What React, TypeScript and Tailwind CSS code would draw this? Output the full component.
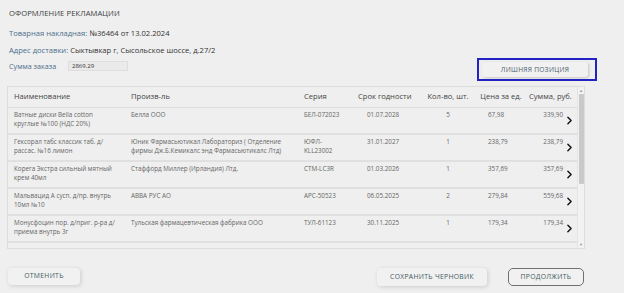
import { ChevronRight } from "lucide-react";

type Row = {
  name: string[];
  maker: string[];
  series: string[];
  date: string;
  qty: string;
  price: string;
  sum: string;
};

const rows: Row[] = [
  {
    name: ["Ватные диски Bella cotton", "круглые №100 (НДС 20%)"],
    maker: ["Белла ООО"],
    series: ["БЕЛ-072023"],
    date: "01.07.2028",
    qty: "5",
    price: "67,98",
    sum: "339,90",
  },
  {
    name: ["Гексорал табс классик таб. д/", "рассас. №16 лимон"],
    maker: [
      "Юник Фармасьютикал Лабораториз ( Отделение",
      "фирмы Дж.Б.Кемикалс энд Фармасьютикалс Лтд)",
    ],
    series: ["ЮФЛ-", "KLL23002"],
    date: "31.01.2027",
    qty: "1",
    price: "238,79",
    sum: "238,79",
  },
  {
    name: ["Корега Экстра сильный мятный", "крем 40мл"],
    maker: ["Стаффорд Миллер (Ирландия) Лтд."],
    series: ["СТМ-LC3R"],
    date: "01.03.2026",
    qty: "1",
    price: "357,69",
    sum: "357,69",
  },
  {
    name: ["Мальвацид А сусп. д/пр. внутрь", "10мл №10"],
    maker: ["АВВА РУС АО"],
    series: ["АРС-50523"],
    date: "06.05.2025",
    qty: "2",
    price: "279,84",
    sum: "559,68",
  },
  {
    name: ["Монусфоцин пор. д/приг. р-ра д/", "приема внутрь 3г"],
    maker: ["Тульская фармацевтическая фабрика ООО"],
    series: ["ТУЛ-61123"],
    date: "30.11.2025",
    qty: "1",
    price: "179,34",
    sum: "179,34",
  },
];

const cols = "grid grid-cols-[117px_173px_54px_65px_50px_56px_1fr]";

function Lines({ lines }: { lines: string[] }) {
  return (
    <>
      {lines.map((l) => (
        <span key={l} className="block whitespace-nowrap">
          {l}
        </span>
      ))}
    </>
  );
}

export default function App() {
  return (
    <div
      className="h-[293px] w-[624px] overflow-hidden bg-[#efefef] text-[#444]"
      style={{ fontFamily: '"Open Sans", "Liberation Sans", sans-serif' }}
    >
      <div className="px-[9px] pt-[8px]">
        <h1 className="text-[7.6px] leading-[10px] tracking-[0.1px] text-[#3d3d3d]">
          ОФОРМЛЕНИЕ РЕКЛАМАЦИИ
        </h1>
        <p className="mt-[10px] text-[7.6px] leading-[10px]">
          <span className="text-[#4d6e8c]">Товарная накладная:</span>{" "}
          <span className="text-[#333]">№36464 от 13.02.2024</span>
        </p>
        <p className="mt-[7px] text-[7.6px] leading-[10px]">
          <span className="text-[#4d6e8c]">Адрес доставки:</span>{" "}
          <span className="text-[#333]">Сыктывкар г, Сысольское шоссе, д.27/2</span>
        </p>
        <div className="mt-[3px] flex items-start">
          <div className="mt-[3px] flex items-center">
            <span className="w-[59px] text-[7.2px] leading-[10px] text-[#4d6e8c]">Сумма заказа</span>
            <div className="h-[10px] w-[60px] border border-[#dedede] bg-[#eaeaea] pl-[3px] text-[6px] leading-[8px] text-[#333]">
              2869.29
            </div>
          </div>
          <div className="ml-auto mr-[18px] flex h-[23px] w-[120px] items-center border-2 border-[#2323c4] pl-[3px]">
            <button className="h-[15px] w-[106px] rounded-[3px] bg-[#f1f1f1] text-[6.6px] tracking-[0.3px] text-[#4a5e6c] shadow-[1px_1px_3px_rgba(0,0,0,0.18)]">
              ЛИШНЯЯ ПОЗИЦИЯ
            </button>
          </div>
        </div>
      </div>

      <div className="ml-[7px] mt-[5px] flex h-[163px] w-[578px] border border-[#dcdcdc] bg-[#efefef]">
        <div className="flex-1">
          <div className={`${cols} h-[21px] items-center border-b border-[#dcdcdc] pl-[6px] text-[7.6px] text-[#444]`}>
            <span>Наименование</span>
            <span>Произв-ль</span>
            <span>Серия</span>
            <span>Срок годности</span>
            <span className="text-center">Кол-во, шт.</span>
            <span className="text-center">Цена за ед.</span>
            <span className="whitespace-nowrap">Сумма, руб.</span>
          </div>
          {rows.map((r) => (
            <div
              key={r.series.join("")}
              className={`${cols} h-[27px] border-b-2 border-[#e0e0e0] pl-[6px] text-[6.3px] leading-[8.5px] text-[#666]`}
            >
              <div className="pt-[3px]">
                <Lines lines={r.name} />
              </div>
              <div className="pt-[3px]">
                <Lines lines={r.maker} />
              </div>
              <div className="pt-[3px]">
                <Lines lines={r.series} />
              </div>
              <div className="pl-[9px] pt-[3px]">{r.date}</div>
              <div className="pt-[3px] text-center">{r.qty}</div>
              <div className="pl-[15px] pt-[3px]">{r.price}</div>
              <div className="flex items-start justify-end pr-[1px]">
                <span className="pt-[3px]">{r.sum}</span>
                <ChevronRight className="mt-[6px] h-[13px] w-[13px] text-[#111]" strokeWidth={2.6} />
              </div>
            </div>
          ))}
        </div>
        <div className="flex w-[7px] flex-col items-center border-l border-[#e4e4e4] bg-[#f2f2f2] py-[1px]">
          <span className="text-[4px] leading-[5px] text-[#999]">▲</span>
          <div className="mt-[1px] h-[90px] w-[5px] rounded-[1px] bg-[#c9c9c9]" />
          <span className="mt-auto text-[4px] leading-[5px] text-[#999]">▼</span>
        </div>
      </div>

      <div className="mt-[18px] flex items-center px-[8px] text-[6.8px] tracking-[0.3px] text-[#3f5b5e]">
        <button className="h-[17px] w-[72px] rounded-[4px] bg-[#f1f1f1] shadow-[1px_1px_4px_rgba(0,0,0,0.15)]">
          ОТМЕНИТЬ
        </button>
        <button className="ml-auto mt-[1px] h-[18px] w-[110px] rounded-[4px] bg-[#f1f1f1] shadow-[1px_1px_4px_rgba(0,0,0,0.15)]">
          СОХРАНИТЬ ЧЕРНОВИК
        </button>
        <button className="ml-[21px] mr-[32px] mt-[1px] h-[18px] w-[76px] rounded-[5px] border border-[#707070] bg-[#f1f1f1]">
          ПРОДОЛЖИТЬ
        </button>
      </div>
    </div>
  );
}
